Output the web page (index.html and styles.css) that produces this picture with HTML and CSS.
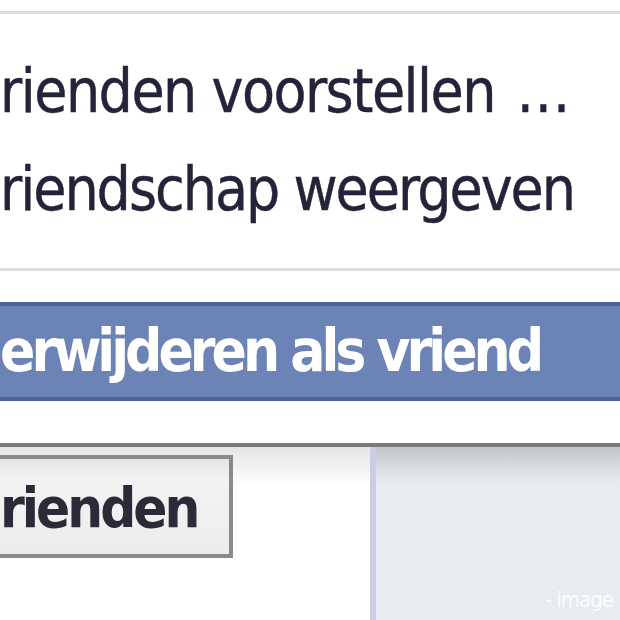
FILE: index.html
```html
<!DOCTYPE html>
<html lang="nl">
<head>
<meta charset="utf-8">
<title>Menu</title>
<link rel="stylesheet" href="styles.css">
</head>
<body>
<div class="screen">
  <div class="menu">
    <div class="menu-list">
      <div class="item item-first">rienden voorstellen <span class="dots">...</span></div>
      <div class="item">riendschap weergeven</div>
    </div>
    <div class="sep"></div>
    <div class="item item-active">erwijderen als vriend</div>
  </div>
  <div class="page">
    <div class="col-left">
      <div class="button">rienden</div>
    </div>
    <div class="col-right">
      <span class="watermark">- image</span>
    </div>
  </div>
</div>
</body>
</html>
```

FILE: styles.css
```css
html, body {
  margin: 0;
  padding: 0;
  background: #ffffff;
}
body {
  width: 620px;
  height: 620px;
  overflow: hidden;
  font-family: "DejaVu Sans", sans-serif;
}
.screen {
  width: 620px;
  height: 620px;
  display: flex;
  flex-direction: column;
}
.menu {
  margin-top: 11px;
  border-top: 3px solid #dddddd;
  border-bottom: 4px solid #7a7a7a;
  padding-bottom: 42px;
  background: #ffffff;
}
.menu-list {
  padding-top: 28px;
}
.item {
  height: 98px;
  line-height: 98px;
  font-size: 60px;
  font-stretch: condensed;
  letter-spacing: -2px;
  color: #23233a;
  white-space: nowrap;
  -webkit-text-stroke: 0.4px #23233a;
}
.item-first {
  letter-spacing: -1.5px;
}
.dots {
  margin-left: 6px;
  letter-spacing: 1px;
}
.sep {
  margin-top: 30px;
  height: 3px;
  background: #dedede;
  margin-bottom: 31px;
}
.item.item-active {
  height: 91px;
  line-height: 91px;
  font-size: 58px;
  background: #6c83b6;
  border-top: 4px solid #4b64a1;
  border-bottom: 4px solid #4b64a1;
  color: #ffffff;
  -webkit-text-stroke: 0;
  font-weight: bold;
  letter-spacing: -4px;
}
.page {
  flex: 1;
  display: flex;
}
.col-left {
  width: 370px;
  background: linear-gradient(to bottom, rgba(0,0,0,0.10), rgba(0,0,0,0) 40px), #ffffff;
  padding-top: 8px;
}
.col-right {
  flex: 1;
  border-left: 6px solid #c8cfe3;
  background: linear-gradient(to bottom, rgba(0,0,0,0.16), rgba(0,0,0,0) 36px), #e8ebf0;
  display: flex;
  justify-content: flex-end;
  align-items: flex-end;
  padding: 0 7px 9px 0;
}
.button {
  width: 197px;
  height: 95px;
  line-height: 97px;
  padding: 0 32px 0 0;
  border: 4px solid #8a8a8a;
  border-left: none;
  background: linear-gradient(to bottom, #e6e6e6, #f3f3f3 25%, #ececec);
  font-size: 56px;
  font-weight: bold;
  font-stretch: condensed;
  letter-spacing: -3px;
  color: #2a2a38;
  white-space: nowrap;
  box-sizing: content-box;
}
.watermark {
  font-size: 22px;
  line-height: 22px;
  font-stretch: condensed;
  letter-spacing: -1px;
  color: rgba(255,255,255,0.9);
}
```
